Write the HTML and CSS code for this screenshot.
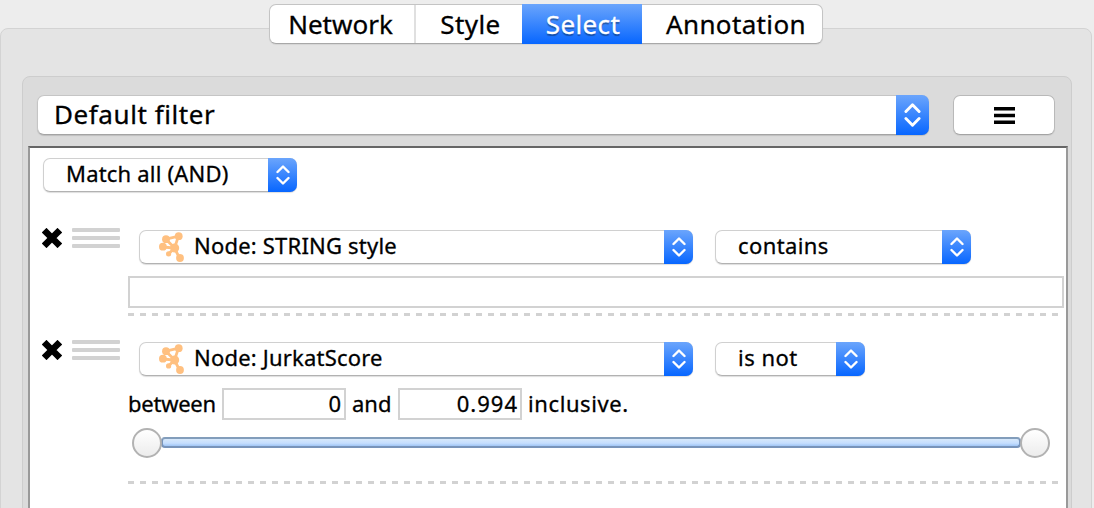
FILE: index.html
```
<!DOCTYPE html>
<html lang="en">
<head>
<meta charset="utf-8">
<title>Select</title>
<link rel="stylesheet" href="styles.css">
</head>
<body>
<svg class="defs" width="0" height="0" aria-hidden="true">
  <symbol id="updown" viewBox="0 0 14 20"><path d="M1.500 7 7 1.500 12.500 7M1.500 13 7 18.500 12.500 13"/></symbol>
  <symbol id="cross" viewBox="0 0 20 20"><path d="M4.500 4.500 15.500 15.500M15.500 4.500 4.500 15.500"/></symbol>
  <symbol id="menu" viewBox="0 0 21 17"><path d="M0 1.700H21M0 8.500H21M0 15.300H21"/></symbol>
  <symbol id="node" viewBox="0 0 26 30">
    <path class="links" d="M7 7.200 19.500 4.200 15.500 16 7 7.200M4 15 15.500 16 21 27M15.500 16 9.500 22"/>
    <circle cx="7" cy="7.200" r="3.900"/><circle cx="19.700" cy="4.200" r="3.900"/><circle cx="3.900" cy="14.700" r="3.900"/>
    <circle cx="15.700" cy="16" r="4.500"/><circle cx="9.600" cy="21.900" r="2.600"/><circle cx="21" cy="26" r="3.900"/>
  </symbol>
</svg>
<main class="window">
  <nav class="tabs">
    <a class="tab network"><span>Network</span></a>
    <a class="tab style"><span>Style</span></a>
    <a class="tab select"><span>Select</span></a>
    <a class="tab annotation"><span>Annotation</span></a>
  </nav>
  <section class="outer">
    <div class="inner">
      <header class="toolbar">
        <div class="combo large"><span class="label default">Default filter</span><i class="stepper"><svg><use href="#updown"/></svg></i></div>
        <button class="menu"><svg><use href="#menu"/></svg></button>
      </header>
      <div class="filters">
        <div class="combo match"><span class="label">Match all (AND)</span><i class="stepper"><svg><use href="#updown"/></svg></i></div>
        <article class="filter">
          <svg class="remove"><use href="#cross"/></svg>
          <div class="grip"><i></i><i></i><i></i></div>
          <div class="body">
            <div class="line">
              <div class="combo column"><svg class="node"><use href="#node"/></svg><span class="label string">Node: STRING style</span><i class="stepper"><svg><use href="#updown"/></svg></i></div>
              <div class="combo contains"><span class="label">contains</span><i class="stepper"><svg><use href="#updown"/></svg></i></div>
            </div>
            <div class="field text"></div>
            <div class="separator"></div>
          </div>
        </article>
        <article class="filter">
          <svg class="remove"><use href="#cross"/></svg>
          <div class="grip"><i></i><i></i><i></i></div>
          <div class="body">
            <div class="line">
              <div class="combo column"><svg class="node"><use href="#node"/></svg><span class="label jurkat">Node: JurkatScore</span><i class="stepper"><svg><use href="#updown"/></svg></i></div>
              <div class="combo isnot"><span class="label">is not</span><i class="stepper"><svg><use href="#updown"/></svg></i></div>
            </div>
            <div class="range"><span class="between">between</span><div class="field number">0</div><span class="and">and</span><div class="field number">0.994</div><span class="inclusive">inclusive.</span></div>
            <div class="slider"><i class="knob"></i><i class="track"></i><i class="knob"></i></div>
            <div class="separator"></div>
          </div>
        </article>
      </div>
    </div>
  </section>
</main>
</body>
</html>
```
FILE: styles.css
```
* { box-sizing: border-box; }
body { margin: 0; overflow: hidden; background: #ededed; color: #000; font: 22px/32px "Noto Sans", sans-serif; -webkit-text-stroke: 0.3px; }
.defs { position: absolute; }
.window { width: 1094px; height: 508px; padding-top: 4px; overflow: hidden; }
.tabs { position: relative; z-index: 1; display: flex; width: 554px; height: 40px; margin-left: 269px; background: #fff; border: 1px solid #c4c4c4; border-bottom-color: #a8a8a8; border-radius: 7px; box-shadow: 0 1px 1px #0001; }
.tab { display: flex; align-items: center; justify-content: center; font-size: 26px; line-height: 38px; white-space: nowrap; }
.network { width: 146px; padding-right: 3px; border-right: 2px solid #e0e0e0; }
.style { width: 106px; padding-left: 3px; letter-spacing: 0.4px; }
.select { width: 120px; height: 40px; margin-top: -1px; padding-left: 2px; color: #fff; background: linear-gradient(#6ba5fc, #0766ff); letter-spacing: 0.4px; text-shadow: 0 2px 1px #0005; }
.annotation { flex: 1; padding-left: 8px; letter-spacing: 0.35px; }
.outer { width: 1092px; height: 500px; margin-top: -16px; padding: 47px 19px 0 21px; background: #e4e4e4; border: 1px solid #d3d3d3; border-radius: 8px; }
.inner { height: 460px; padding: 18px 3px 0 5px; background: #dbdbdb; border: 1px solid #cdcdcd; border-radius: 8px; }
.toolbar { display: flex; align-items: flex-start; gap: 24px; height: 51px; padding-left: 9px; }
.combo { display: flex; flex: none; height: 34px; background: #fff; border: 1px solid #d0d0d0; border-bottom-color: #b2b2b2; border-radius: 7px; box-shadow: 0 1px 1px #0002; white-space: nowrap; }
.label { flex: 1; padding-left: 22px; line-height: 29px; letter-spacing: 0.2px; }
.stepper { display: flex; align-items: center; justify-content: center; flex: none; width: 29px; height: 34px; margin: -1px -1px 0 0; border-radius: 0 7px 7px 0; background: linear-gradient(#6ba5fc, #0766ff); }
.stepper svg { width: 14px; height: 20px; fill: none; stroke: #fff; stroke-width: 2.4; stroke-linecap: round; stroke-linejoin: round; }
.large { width: 892px; height: 40px; border-color: #c5c5c5; border-bottom-color: #a4a4a4; font-size: 26px; line-height: 38px; }
.large .label { padding-left: 16px; line-height: 36px; letter-spacing: 0.58px; }
.large .stepper { width: 33px; height: 40px; }
.large .stepper svg { width: 17px; height: 24px; }
.menu { display: flex; align-items: center; justify-content: center; width: 102px; height: 40px; padding: 1px 0 0; background: #fff; border: 1px solid #b9b9b9; border-bottom-color: #a4a4a4; border-radius: 7px; box-shadow: 0 1px 1px #0001; }
.menu svg { width: 21px; height: 17px; stroke: #000; stroke-width: 3.4; }
.filters { width: 1040px; height: 400px; padding-top: 10px; background: #fff; border: solid #999; border-width: 2px 2px 0; border-top-color: #666; }
.match { width: 254px; margin: 0 0 36px 13px; }
.filter { display: flex; height: 112px; padding-left: 12px; }
.remove { flex: none; width: 20px; height: 20px; margin-right: 10px; fill: none; stroke: #000; stroke-width: 6.6; stroke-linecap: square; }
.grip { display: flex; flex-direction: column; flex: none; gap: 4px; width: 48px; height: 20px; margin-right: 8px; }
.grip i { height: 4px; background: #d2d2d2; border-radius: 1px; }
.body { width: 936px; padding-top: 2px; }
.line { display: flex; gap: 22px; height: 46px; padding-left: 11px; }
.column { width: 554px; }
.node { width: 26px; height: 30px; margin: 1px 0 0 19px; fill: #ffc080; }
.column .label { padding-left: 9px; }
.links { fill: none; stroke: #ffc080; stroke-width: 2.8; }
.contains { width: 256px; }
.contains .label { letter-spacing: 0.4px; }
.isnot { width: 150px; }
.isnot .label { letter-spacing: 0.5px; }
.field { height: 32px; background: #fff; border: 2px solid #d2d2d2; }
.text { margin-bottom: 5px; }
.separator { height: 3px; width: 931px; background: repeating-linear-gradient(90deg, #d2d2d2 0 6px, transparent 6px 12px); }
.range { display: flex; height: 39px; line-height: 30px; white-space: nowrap; }
.between { width: 94px; letter-spacing: -0.25px; }
.number { width: 124px; padding-right: 2px; line-height: 27px; text-align: right; letter-spacing: 1px; }
.and { width: 52px; padding-left: 6px; }
.inclusive { padding-left: 6px; letter-spacing: 0.6px; }
.slider { display: flex; align-items: center; width: 918px; height: 31px; margin: 0 0 23px 3.5px; }
.knob { position: relative; z-index: 1; flex: none; width: 30px; height: 30px; border: 2px solid #b2b2b2; border-radius: 50%; background: linear-gradient(#fff, #ececec); }
.track { flex: 1; height: 11px; margin: 0 -1px; border: 2px solid #7894ba; border-top-color: #829dbb; border-radius: 4px; background: linear-gradient(#d7e8fa, #c5defe 60%, #a0c5f5); }
```
